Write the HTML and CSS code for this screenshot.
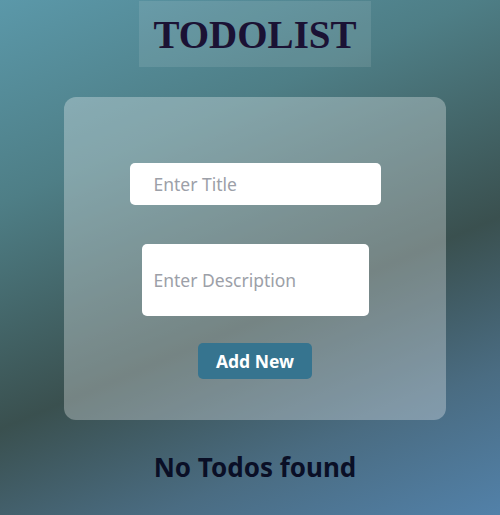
FILE: index.html
```html
<!DOCTYPE html>
<html>
<head>
<meta charset="utf-8">
<link rel="stylesheet" href="styles.css">
</head>
<body>
<div class="page">
  <h1 class="brand">TODOLIST</h1>
  <form class="card">
    <input class="field title-field" type="text" placeholder="Enter Title">
    <textarea class="field desc-field" placeholder="Enter Description"></textarea>
    <button class="add-btn" type="button">Add New</button>
  </form>
  <h2 class="empty">No Todos found</h2>
</div>
</body>
</html>
```
FILE: styles.css
```css
html, body {
  margin: 0;
  padding: 0;
  height: 100%;
}
body {
  background: linear-gradient(157deg, #5b98a9 0%, #4e7e86 28%, #3a504f 59%, #4a6c82 80%, #5281a9 100%);
  font-family: "Noto Sans", sans-serif;
  overflow: hidden;
}
.page {
  display: flex;
  flex-direction: column;
  align-items: center;
  padding: 1px 0 0 10px;
}
.brand {
  margin: 0;
  width: 232px;
  height: 66px;
  display: flex;
  align-items: center;
  justify-content: center;
  background: rgba(255, 255, 255, 0.1);
  font-family: "Liberation Serif", serif;
  font-weight: bold;
  font-size: 39px;
  color: #1b1234;
}
.card {
  margin-top: 30px;
  width: 382px;
  height: 323px;
  box-sizing: border-box;
  border-radius: 12px;
  background: rgba(255, 255, 255, 0.3);
  display: flex;
  flex-direction: column;
  align-items: center;
  padding-top: 66px;
}
.field {
  border: none;
  outline: none;
  background: #fff;
  border-radius: 5px;
  font-family: "Noto Sans", sans-serif;
  font-size: 17.5px;
  color: #333;
  box-sizing: border-box;
}
.field::placeholder {
  color: #9ca0a8;
}
.title-field {
  width: 251px;
  height: 42px;
  padding: 0 0 0 24px;
}
.desc-field {
  margin-top: 39px;
  width: 227px;
  height: 72px;
  padding: 24px 12px 0;
  resize: none;
  line-height: 24px;
  overflow: hidden;
}
.add-btn {
  margin-top: 27px;
  width: 114px;
  height: 36px;
  border: none;
  border-radius: 5px;
  background: #36748f;
  color: #fff;
  font-family: "Noto Sans", sans-serif;
  font-weight: bold;
  font-size: 17.5px;
  padding: 0;
}
.empty {
  margin: 29px 0 0;
  font-family: "Noto Sans", sans-serif;
  font-weight: bold;
  font-size: 26px;
  color: #0a0f26;
}
```
